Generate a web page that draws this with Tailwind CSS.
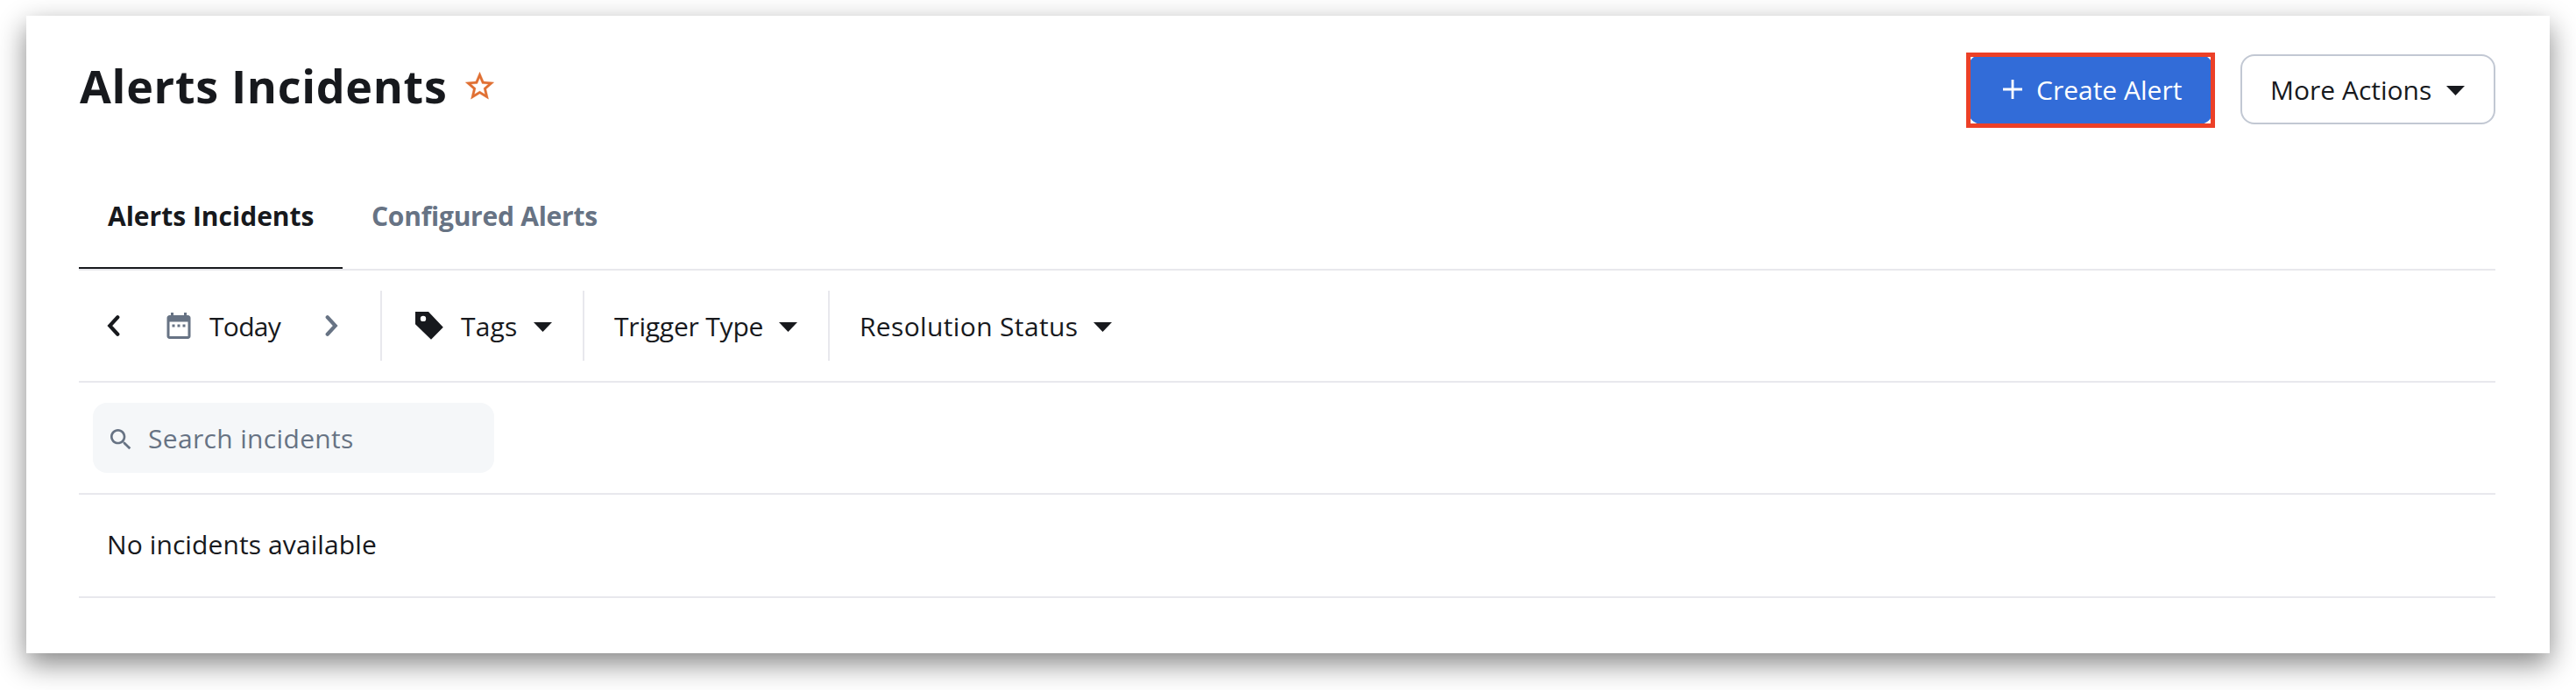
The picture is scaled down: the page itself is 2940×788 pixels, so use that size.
<!DOCTYPE html>
<html lang="en">
<head>
<meta charset="utf-8">
<title>Alerts Incidents</title>
<script src="https://cdn.jsdelivr.net/npm/@tailwindcss/browser@4"></script>
</head>
<body class="h-[788px] overflow-hidden bg-white px-[30px] pt-[18px] font-['Open_Sans',sans-serif] text-[30px] text-[#17191d]">
<main class="h-[728px] w-[2880px] bg-white px-[60px] pr-[62px] shadow-[0_12px_30px_rgba(0,0,0,0.48)]">

  <header class="flex h-[186px] items-start justify-between pt-11">
    <div class="flex h-[72px] items-center pl-px">
      <h1 class="w-[437px] whitespace-nowrap text-[52px] leading-[72px] font-bold tracking-[0.7px]">Alerts Incidents</h1>
      <svg class="size-[39px]" viewBox="0 0 24 24" fill="#e06f32" stroke="#e06f32" stroke-width="0.2"><path d="M22 9.24l-7.19-.62L12 2 9.19 8.63 2 9.24l5.46 4.73L5.82 21 12 17.27 18.18 21l-1.63-7.03L22 9.24zM12 15.4l-3.76 2.27 1-4.28-3.32-2.88 4.38-.38L12 6.1l1.71 4.04 4.38.38-3.32 2.88 1 4.28L12 15.4z"/></svg>
    </div>
    <div class="flex items-start">
      <div class="relative flex h-20 w-[280px] items-center rounded-2xl bg-[#326cd8] pl-10 text-white">
        <svg class="mr-4 size-[22px]" viewBox="0 0 22 22" stroke="currentColor" stroke-width="2.8"><path d="M11 0v22M0 11h22"/></svg>
        <span class="whitespace-nowrap">Create Alert</span>
        <div class="absolute -top-0.5 -left-0.5 h-[86px] w-[284px] border-5 border-[#ec4027]"></div>
      </div>
      <div class="ml-[31px] flex h-20 w-[291px] items-center rounded-2xl border-2 border-[#c2c8d3] pl-8">
        <span class="w-[201px] whitespace-nowrap">More Actions</span>
        <svg class="mt-0.5 h-[11px] w-[21px]" viewBox="0 0 21 11" fill="currentColor"><path d="M0 0h21L10.500 11z"/></svg>
      </div>
    </div>
  </header>

  <nav class="flex h-[105px] border-b-2 border-[#e8e8ed] font-bold">
    <div class="h-[103px] w-[301px] border-b-2 border-[#17191d] pt-[23px] pl-[33px] leading-[40px] whitespace-nowrap">Alerts Incidents</div>
    <div class="pt-[23px] pl-[33px] leading-[40px] whitespace-nowrap tracking-[-0.25px] text-[#677384]">Configured Alerts</div>
  </nav>

  <section class="flex h-32 items-center border-b-2 border-[#e8e8ed]">
    <div class="flex h-20 w-[346px] items-center border-r-2 border-[#e8e8ed] pl-8">
      <svg class="h-6 w-[15px]" viewBox="0 0 15 24" fill="none" stroke="currentColor" stroke-width="4.200" stroke-linecap="round" stroke-linejoin="miter"><path d="M12.300 2.300L3.300 12l9 9.700"/></svg>
      <svg class="ml-[49px] size-9" viewBox="0 0 24 24" fill="#677384"><path d="M9 11H7v2h2v-2zm4 0h-2v2h2v-2zm4 0h-2v2h2v-2zm2-7h-1V2h-2v2H8V2H6v2H5c-1.110 0-1.990.9-1.990 2L3 20c0 1.100.890 2 2 2h14c1.100 0 2-.9 2-2V6c0-1.100-.9-2-2-2zm0 16H5V9h14v11z"/></svg>
      <span class="ml-[17px] w-[132px] whitespace-nowrap tracking-[-0.7px]">Today</span>
      <svg class="h-6 w-[15px]" viewBox="0 0 15 24" fill="none" stroke="#677384" stroke-width="4.200" stroke-linecap="round"><path d="M2.700 2.300l9 9.700-9 9.700"/></svg>
    </div>
    <div class="flex h-20 w-[231px] items-center border-r-2 border-[#e8e8ed] pl-[38px]">
      <svg class="size-8" viewBox="0 0 32 32" fill="currentColor" fill-rule="evenodd"><path d="M0 0h15l16.800 17.800L18 31.800 0 14.300zM9 4.700a3.200 3.200 0 1 0 0 6.400a3.200 3.200 0 1 0 0-6.400z"/></svg>
      <span class="ml-5 w-[83px] whitespace-nowrap tracking-[0.2px]">Tags</span>
      <svg class="mt-0.5 h-[11px] w-[21px]" viewBox="0 0 21 11" fill="currentColor"><path d="M0 0h21L10.500 11z"/></svg>
    </div>
    <div class="flex h-20 w-[280px] items-center border-r-2 border-[#e8e8ed] pl-[34px]">
      <span class="w-[188px] whitespace-nowrap tracking-[-0.2px]">Trigger Type</span>
      <svg class="mt-0.5 h-[11px] w-[21px]" viewBox="0 0 21 11" fill="currentColor"><path d="M0 0h21L10.500 11z"/></svg>
    </div>
    <div class="flex h-20 items-center pl-[34px]">
      <span class="w-[267px] whitespace-nowrap tracking-[0.35px]">Resolution Status</span>
      <svg class="mt-0.5 h-[11px] w-[21px]" viewBox="0 0 21 11" fill="currentColor"><path d="M0 0h21L10.500 11z"/></svg>
    </div>
  </section>

  <section class="flex h-32 items-center border-b-2 border-[#e8e8ed] pl-4">
    <div class="flex h-20 w-[458px] items-center rounded-2xl bg-[#f5f7f9] pl-4 text-[#677384]">
      <svg class="mt-1 size-8" viewBox="0 0 24 24" fill="currentColor"><path d="M15.500 14h-.790l-.280-.270C15.410 12.590 16 11.110 16 9.500 16 5.910 13.090 3 9.500 3S3 5.910 3 9.500 5.910 16 9.500 16c1.610 0 3.090-.590 4.230-1.570l.270.280v.790l5 4.990L20.490 19l-4.990-5zm-6 0C7.010 14 5 11.990 5 9.500S7.010 5 9.500 5 14 7.010 14 9.500 11.990 14 9.500 14z"/></svg>
      <span class="ml-[15px] whitespace-nowrap tracking-[0.34px]">Search incidents</span>
    </div>
  </section>

  <section class="flex h-[118px] items-center border-b-2 border-[#e8e8ed] pb-[3px] pl-8">
    <span class="whitespace-nowrap tracking-[0.1px]">No incidents available</span>
  </section>
</main>
</body>
</html>
